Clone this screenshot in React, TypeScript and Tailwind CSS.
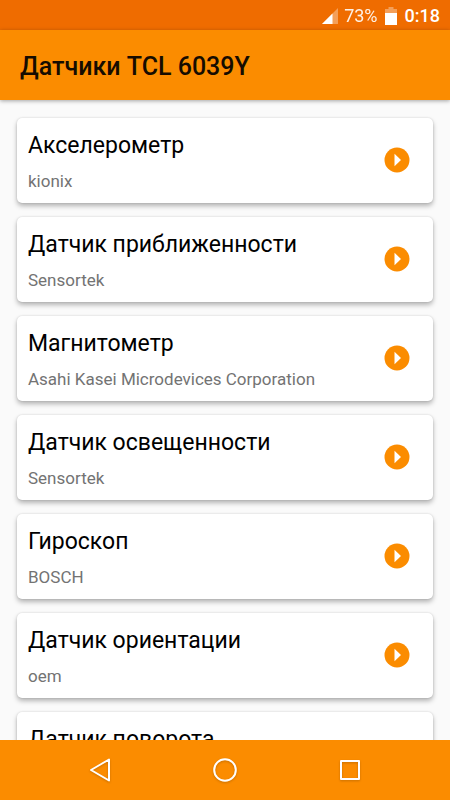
const sensors = [
  { name: "Акселерометр", vendor: "kionix" },
  { name: "Датчик приближенности", vendor: "Sensortek" },
  { name: "Магнитометр", vendor: "Asahi Kasei Microdevices Corporation" },
  { name: "Датчик освещенности", vendor: "Sensortek" },
  { name: "Гироскоп", vendor: "BOSCH" },
  { name: "Датчик ориентации", vendor: "oem" },
  { name: "Датчик поворота" },
];

function StatusBar() {
  return (
    <div className="flex h-[30px] shrink-0 items-center justify-end bg-[#ef6c00] pt-px pr-[10px] text-lg leading-6 text-white">
      <svg className="mr-[6px]" width="16" height="16" viewBox="0 0 16 16" aria-hidden="true">
        <path d="M16 0V16H0Z" fill="#fff" fillOpacity="0.35" />
        <path d="M10.500 5.500V16H0Z" fill="#fff" />
      </svg>
      <span className="mr-[7px] opacity-90">73%</span>
      <svg className="mr-[8px]" width="12" height="18" viewBox="0 0 12 18" aria-hidden="true">
        <path d="M3.500 0H8.500V2H12V6H0V2H3.500Z" fill="#fff" fillOpacity="0.35" />
        <path d="M0 6H12V18H0Z" fill="#fff" />
      </svg>
      <span className="font-medium">0:18</span>
    </div>
  );
}

function SensorCard({ name, vendor }: { name: string; vendor?: string }) {
  return (
    <li className="flex h-[85px] shrink-0 items-start justify-between rounded-[5px] bg-white pt-3 pr-[23px] pl-[11px] shadow-[0_3px_5px_rgba(0,0,0,0.28),0_0_2px_rgba(0,0,0,0.15)]">
      <div>
        <h2 className="text-[23px] leading-8 text-black">{name}</h2>
        {vendor && <p className="mt-[7px] text-[17px] leading-6 text-[#737373]">{vendor}</p>}
      </div>
      <button type="button" aria-label={name} className="mt-[17px]">
        <svg width="26" height="26" viewBox="0 0 26 26" aria-hidden="true">
          <circle cx="13" cy="13" r="12.500" fill="#fb8c00" />
          <path d="M10.500 6.800L17 13L10.500 19.200Z" fill="#fff" />
        </svg>
      </button>
    </li>
  );
}

function NavigationBar() {
  const icon = "drop-shadow-[0_1px_1px_rgba(0,0,0,0.2)]";
  return (
    <nav className="flex h-[60px] shrink-0 items-center justify-center gap-[101px] bg-[#fb8c00]">
      <button type="button" aria-label="Назад">
        <svg className={icon} width="24" height="24" viewBox="0 0 24 24" fill="none" stroke="#fff" strokeWidth="2" strokeLinejoin="round" aria-hidden="true">
          <path d="M21 1.500V22.500L3 12Z" />
        </svg>
      </button>
      <button type="button" aria-label="Домой">
        <svg className={icon} width="24" height="24" viewBox="0 0 24 24" fill="none" stroke="#fff" strokeWidth="2" aria-hidden="true">
          <circle cx="12" cy="12" r="10.800" />
        </svg>
      </button>
      <button type="button" aria-label="Обзор">
        <svg className={icon} width="24" height="24" viewBox="0 0 24 24" fill="none" stroke="#fff" strokeWidth="2" strokeLinejoin="round" aria-hidden="true">
          <path d="M3 3H21V21H3Z" />
        </svg>
      </button>
    </nav>
  );
}

export default function App() {
  return (
    <div className="flex h-screen flex-col bg-[#fafafa] font-['Roboto',sans-serif]">
      <StatusBar />
      <header className="flex h-[70px] shrink-0 items-center bg-[#fb8c00] px-5 pt-1 shadow-[0_1px_4px_rgba(0,0,0,0.35)]">
        <h1 className="text-[25px] leading-8 font-medium text-[#160c00]">Датчики TCL 6039Y</h1>
      </header>
      <main className="min-h-0 flex-1 overflow-hidden">
        <ul className="flex flex-col gap-[14px] px-[17px] pt-[18px]">
          {sensors.map((sensor) => (
            <SensorCard key={sensor.name} {...sensor} />
          ))}
        </ul>
      </main>
      <NavigationBar />
    </div>
  );
}
